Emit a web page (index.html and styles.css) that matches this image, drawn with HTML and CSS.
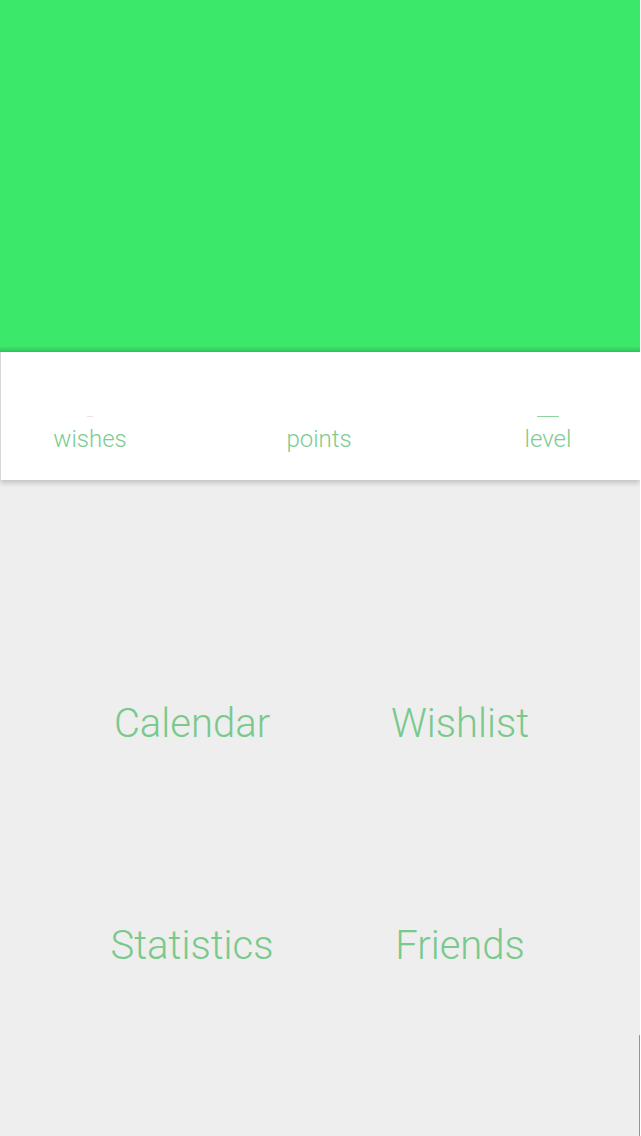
FILE: index.html
```html
<!DOCTYPE html>
<html>
<head>
<meta charset="utf-8">
<link rel="stylesheet" href="styles.css">
</head>
<body>
<div class="app">
  <header class="hero"></header>
  <section class="stats">
    <div class="stat"><span class="stat-value stat-value--dot"></span><span class="stat-label">wishes</span></div>
    <div class="stat"><span class="stat-value"></span><span class="stat-label">points</span></div>
    <div class="stat"><span class="stat-value stat-value--line"></span><span class="stat-label">level</span></div>
  </section>
  <nav class="menu">
    <a class="menu-item">Calendar</a>
    <a class="menu-item">Wishlist</a>
    <a class="menu-item">Statistics</a>
    <a class="menu-item">Friends</a>
  </nav>
  <div class="edge"></div>
</div>
</body>
</html>
```

FILE: styles.css
```css
html, body {
  margin: 0;
  padding: 0;
  background: #ffffff;
}
body {
  font-family: Roboto, "Liberation Sans", sans-serif;
}
.app {
  position: relative;
  width: 640px;
  height: 1136px;
  background: #eeeeee;
  overflow: hidden;
}
.hero {
  height: 352px;
  background: linear-gradient(to bottom, #3ce86a 0, #3ce86a 346px, #33c45a 352px);
}
.stats {
  position: relative;
  height: 128px;
  background: #ffffff;
  border-left: 1px solid #d8d8d8;
  box-shadow: 0 3px 5px rgba(0, 0, 0, 0.18);
  display: grid;
  grid-template-columns: 178px 178px 178px;
  column-gap: 51px;
  align-items: end;
  padding-bottom: 27px;
  box-sizing: border-box;
}
.stat {
  display: flex;
  flex-direction: column;
  align-items: center;
  color: #7dcb8f;
}
.stat-value {
  display: block;
  height: 1px;
  margin-bottom: 8px;
}
.stat-value--dot {
  width: 6px;
  background: #f2dfe0;
}
.stat-value--line {
  width: 22px;
  background: #8fd3a0;
}
.stat-label {
  font-size: 24px;
  font-weight: 300;
  line-height: 28px;
}
.menu {
  display: grid;
  grid-template-columns: 268px 268px;
  padding: 222px 0 0 58px;
  row-gap: 178px;
}
.menu-item {
  text-align: center;
  color: #79c98c;
  font-size: 40px;
  font-weight: 300;
  line-height: 44px;
}
.edge {
  position: absolute;
  right: 0;
  top: 1035px;
  bottom: 0;
  width: 1px;
  background: #2fcf6a;
}
```
